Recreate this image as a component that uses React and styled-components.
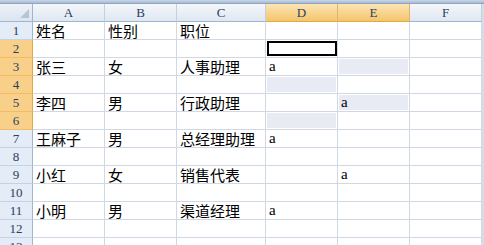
import React from 'react'
import styled, { createGlobalStyle } from 'styled-components'

const GlobalStyle = createGlobalStyle`
	html, body {
		margin: 0;
		padding: 0;
		background: #ffffff;
		overflow: hidden;
	}
`

const columns = [
	{ key: 'A', width: 72 },
	{ key: 'B', width: 72 },
	{ key: 'C', width: 89 },
	{ key: 'D', width: 72, selected: true },
	{ key: 'E', width: 72, selected: true },
	{ key: 'F', width: 72 },
]

const rows = [
	['姓名', '性别', '职位', '', '', ''],
	['', '', '', '', '', ''],
	['张三', '女', '人事助理', 'a', '', ''],
	['', '', '', '', '', ''],
	['李四', '男', '行政助理', '', 'a', ''],
	['', '', '', '', '', ''],
	['王麻子', '男', '总经理助理', 'a', '', ''],
	['', '', '', '', '', ''],
	['小红', '女', '销售代表', '', 'a', ''],
	['', '', '', '', '', ''],
	['小明', '男', '渠道经理', 'a', '', ''],
	['', '', '', '', '', ''],
	['', '', '', '', '', ''],
]

// multi-range selection: D2 active, E3 D4 E5 D6 shaded
const shaded = ['E3', 'D4', 'E5', 'D6']
const active = 'D2'
const selectedRows = [2, 3, 4, 5, 6]

const App = () => {
	return (
		<>
			<GlobalStyle />
			<Window>
				<TopStrip />
				<Sheet $cols={columns.map((c) => c.width)}>
					<Corner>
						<CornerMark />
					</Corner>
					{columns.map((col) => (
						<ColHeader key={col.key} $selected={col.selected}>{col.key}</ColHeader>
					))}
					{rows.map((row, r) => (
						<React.Fragment key={r}>
							<RowHeader $selected={selectedRows.includes(r + 1)}>{r + 1}</RowHeader>
							{row.map((value, c) => {
								const ref = columns[c].key + (r + 1)
								const latin = /^[a-z]+$/.test(value)
								return (
									<Cell key={ref}>
										{shaded.includes(ref) && <Shade />}
										{ref === active && <ActiveBox />}
										{value && <CellText $latin={latin}>{value}</CellText>}
									</Cell>
								)
							})}
						</React.Fragment>
					))}
				</Sheet>
			</Window>
		</>
	)
}

export default App

const Window = styled.div`
	width: 484px;
	height: 245px;
	overflow: hidden;
	background: #ffffff;
	position: relative;
`

const TopStrip = styled.div`
	height: 3px;
	background: linear-gradient(#c9d6e6, #a7bbd3);
	border-bottom: 1px solid #8ea6c2;
`

const Sheet = styled.div`
	display: grid;
	grid-template-columns: 33px ${(p) => p.$cols.map((w) => `${w}px`).join(' ')};
	grid-auto-rows: 18px;
	width: 482px;
	border-right: 2px solid #d6dde8;
`

const Corner = styled.div`
	position: relative;
	background: linear-gradient(#eef2f8, #dbe4ef);
	border-right: 1px solid #9eb6ce;
	border-bottom: 1px solid #9eb6ce;
	box-sizing: border-box;
`

const CornerMark = styled.div`
	position: absolute;
	right: 3px;
	bottom: 3px;
	width: 0;
	height: 0;
	border-left: 9px solid transparent;
	border-bottom: 9px solid #b5c5d8;
`

const ColHeader = styled.div`
	box-sizing: border-box;
	display: flex;
	align-items: center;
	justify-content: center;
	font-family: "Liberation Serif", "DejaVu Serif", serif;
	font-size: 13px;
	color: #27415f;
	background: ${(p) => (p.$selected ? 'linear-gradient(#fbe4b4, #f5c56c)' : 'linear-gradient(#f4f7fb, #dfe7f1)')};
	border-right: 1px solid ${(p) => (p.$selected ? '#e1b370' : '#c3d0de')};
	border-bottom: 1px solid ${(p) => (p.$selected ? '#e0a848' : '#9eb6ce')};
`

const RowHeader = styled.div`
	box-sizing: border-box;
	display: flex;
	align-items: center;
	justify-content: center;
	padding-top: 1px;
	font-family: "Liberation Serif", "DejaVu Serif", serif;
	font-size: 13px;
	color: #27415f;
	background: ${(p) => (p.$selected ? '#f8d08a' : '#e4ecf7')};
	border-right: 1px solid ${(p) => (p.$selected ? '#e0a848' : '#9eb6ce')};
	border-bottom: 1px solid ${(p) => (p.$selected ? '#f3bb62' : '#c5d2e1')};
`

const Cell = styled.div`
	box-sizing: border-box;
	position: relative;
	display: flex;
	align-items: flex-end;
	padding-left: 3px;
	border-right: 1px solid #d0d7e5;
	border-bottom: 1px solid #d0d7e5;
	white-space: nowrap;
	overflow: visible;
`

const CellText = styled.span`
	position: relative;
	font-family: ${(p) => (p.$latin ? '"Liberation Serif", "DejaVu Serif", serif' : '"Noto Sans CJK SC", "Noto Sans", sans-serif')};
	font-size: ${(p) => (p.$latin ? '15px' : '15px')};
	line-height: 17px;
	color: #000000;
	z-index: 2;
`

const Shade = styled.div`
	position: absolute;
	left: 1px;
	right: 1px;
	top: 1px;
	bottom: 1px;
	background: #e8ebf4;
`

const ActiveBox = styled.div`
	position: absolute;
	left: 1px;
	right: 0px;
	top: 1px;
	bottom: 1px;
	border: 2px solid #000000;
	box-sizing: border-box;
`
